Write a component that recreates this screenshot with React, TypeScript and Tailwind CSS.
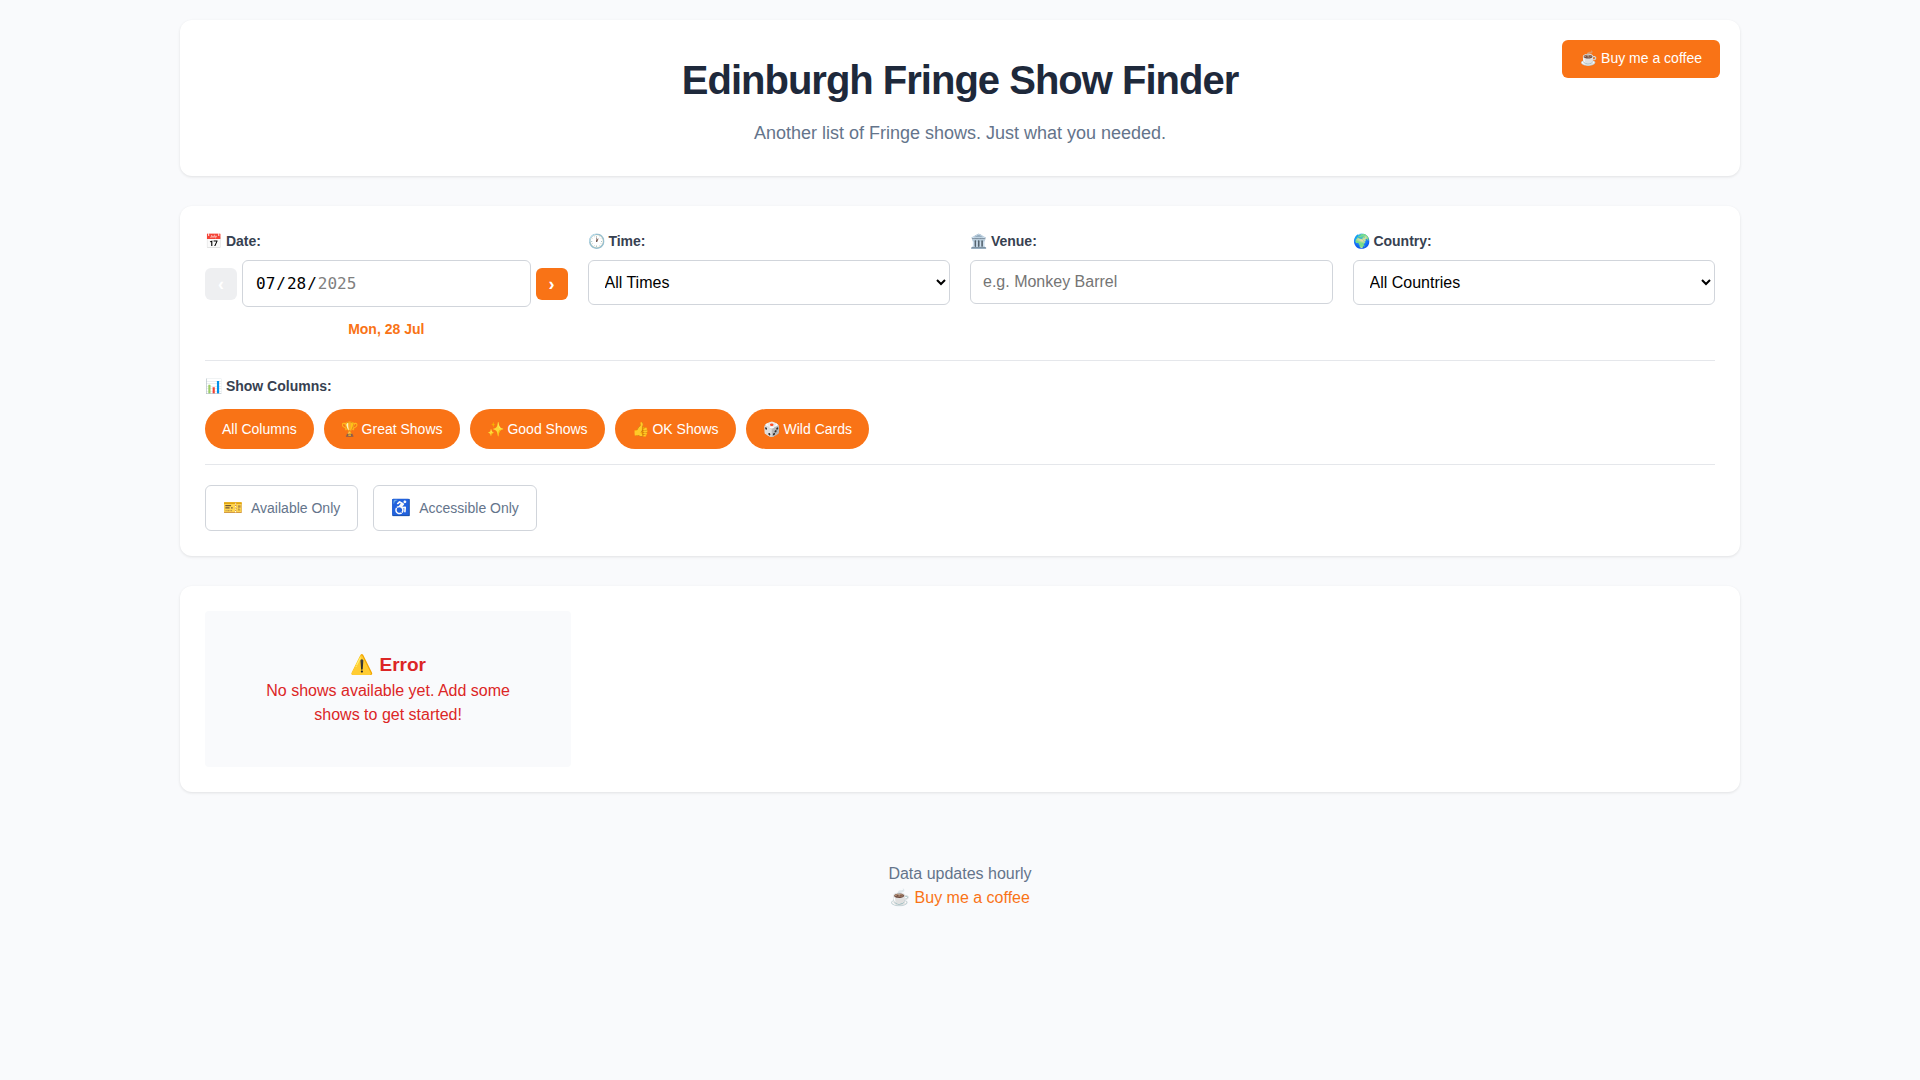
import { useState, type ReactNode } from "react";

const card = "rounded-xl bg-white shadow-[0_1px_3px_rgba(0,0,0,0.1)]";
const field = "w-full rounded-md border border-[#d1d5db] bg-white p-3 text-base text-black";
const stepButton =
  "flex size-8 shrink-0 items-center justify-center rounded-md bg-[#f97316] text-lg font-bold text-white disabled:bg-[#eeeff1]";
const caption = "text-sm leading-[21px] font-semibold text-[#374151]";

const columns = ["All Columns", "🏆 Great Shows", "✨ Good Shows", "👍 OK Shows", "🎲 Wild Cards"];

const toggles = [
  { icon: "🎫", label: "Available Only" },
  { icon: "♿", label: "Accessible Only" },
];

function Field({ id, label, children }: { id: string; label: string; children: ReactNode }) {
  return (
    <div className="flex min-w-0 flex-col items-stretch">
      <label htmlFor={id} className={`${caption} mb-2`}>
        {label}
      </label>
      {children}
    </div>
  );
}

export default function App() {
  const [date, setDate] = useState("2025-07-28");
  return (
    <div className="min-h-screen bg-[#f9fafc] font-['Liberation_Sans',Arial,sans-serif] text-base text-[#1e293b]">
      <div className="mx-auto max-w-[1600px] p-5">
        <header className={`${card} relative mb-[30px] px-5 py-[30px] text-center`}>
          <a
            href="#coffee"
            className="absolute top-5 right-5 rounded-md bg-[#f97316] px-[18px] pt-[7px] pb-[9px] text-sm leading-[22px] text-white"
          >
            ☕ Buy me a coffee
          </a>
          <h1 className="mb-[10px] text-[40px] leading-[60px] font-bold tracking-tight">
            Edinburgh Fringe Show Finder
          </h1>
          <p className="text-lg leading-[26px] text-[#64748b]">Another list of Fringe shows. Just what you needed.</p>
        </header>

        <section className={`${card} mb-[30px] p-[25px]`}>
          <div className="grid grid-cols-4 items-start gap-5">
            <Field id="date" label="📅 Date:">
              <div className="flex items-center gap-[5px]">
                <button type="button" aria-label="Previous day" disabled className={stepButton}>
                  ‹
                </button>
                <input
                  id="date"
                  type="date"
                  min="2025-07-28"
                  max="2025-08-25"
                  value={date}
                  onChange={(e) => setDate(e.target.value)}
                  className={`${field} h-[47px] min-w-0 flex-1 font-['DejaVu_Sans_Mono',monospace] [&::-webkit-calendar-picker-indicator]:opacity-0`}
                />
                <button type="button" aria-label="Next day" className={stepButton}>
                  ›
                </button>
              </div>
              <div className="mt-3 text-center text-sm leading-5 font-semibold text-[#f97316]">Mon, 28 Jul</div>
            </Field>
            <Field id="time" label="🕐 Time:">
              <select id="time" className={field}>
                <option>All Times</option>
              </select>
            </Field>
            <Field id="venue" label="🏛️ Venue:">
              <input
                id="venue"
                type="text"
                placeholder="e.g. Monkey Barrel"
                className={`${field} leading-[18px] placeholder:text-[#757575]`}
              />
            </Field>
            <Field id="country" label="🌍 Country:">
              <select id="country" className={field}>
                <option>All Countries</option>
              </select>
            </Field>
          </div>

          <div className="mt-[21px] border-y border-[#e5e7eb] py-[15px]">
            <div className={`${caption} mb-3`}>📊 Show Columns:</div>
            <div className="flex flex-wrap gap-[10px]">
              {columns.map((name) => (
                <button
                  key={name}
                  type="button"
                  className="h-10 rounded-[20px] bg-[#f97316] px-[17px] text-sm text-white"
                >
                  {name}
                </button>
              ))}
            </div>
          </div>

          <div className="mt-5 flex flex-wrap gap-[15px]">
            {toggles.map(({ icon, label }) => (
              <button
                key={label}
                type="button"
                className="flex h-[46px] items-center gap-2 rounded-md border border-[#d1d5db] bg-white px-[17px] text-sm text-[#64748b]"
              >
                <span className="text-base">{icon}</span>
                {label}
              </button>
            ))}
          </div>
        </section>

        <main className={`${card} grid grid-cols-4 gap-[15px] p-[25px]`}>
          <div className="rounded bg-[#f9fafc] p-10 text-center leading-6 text-[#dc2626]">
            <h3 className="text-[19px] leading-7 font-bold">⚠️ Error</h3>
            <p className="px-5">No shows available yet. Add some shows to get started!</p>
          </div>
        </main>

        <footer className="mt-[70px] text-center leading-6 text-[#64748b]">
          <p>Data updates hourly</p>
          <a href="#coffee" className="text-[#f97316]">
            ☕ Buy me a coffee
          </a>
        </footer>
      </div>
    </div>
  );
}
